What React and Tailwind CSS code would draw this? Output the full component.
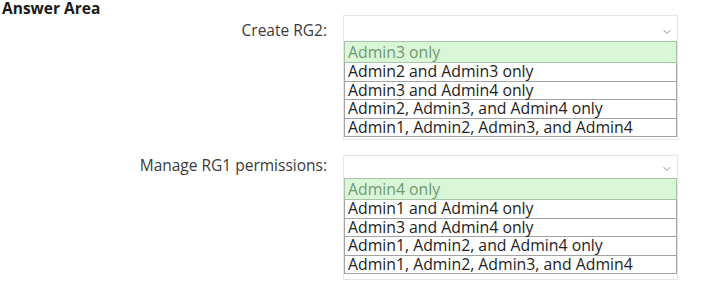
import { ChevronDown } from "lucide-react";

const groups = [
  {
    label: "Create RG2:",
    labelPad: "pt-[6px]",
    header: "h-[25px]",
    options: [
      "Admin3 only",
      "Admin2 and Admin3 only",
      "Admin3 and Admin4 only",
      "Admin2, Admin3, and Admin4 only",
      "Admin1, Admin2, Admin3, and Admin4",
    ],
  },
  {
    label: "Manage RG1 permissions:",
    labelPad: "pt-[1px]",
    header: "h-[22px]",
    options: [
      "Admin4 only",
      "Admin1 and Admin4 only",
      "Admin3 and Admin4 only",
      "Admin1, Admin2, and Admin4 only",
      "Admin1, Admin2, Admin3, and Admin4",
    ],
  },
];

function Dropdown({ label, labelPad, header, options }) {
  return (
    <div className="flex items-start">
      <div className={`w-[328px] pr-[1px] ${labelPad} text-right text-[15.5px] leading-[18px] text-[#3a3a3a]`}>
        {label}
      </div>

      <div className="ml-[15px] w-[335px] h-[125px] border border-[#e6e6e6]">
        {/* header with chevron */}
        <div className={`${header} flex items-end justify-end pr-[4px] pb-[3px]`}>
          <ChevronDown size={12} strokeWidth={2} className="text-[#8a8a8a]" />
        </div>

        <div className="flex flex-col">
          <div className="h-[22px] border border-[#a8c4a8] bg-[#d9f6d6] pl-[3px] text-[15.8px] leading-[20px] text-[#6f9a6f]">
            {options[0]}
          </div>
          {options.slice(1).map((opt) => (
            <div
              key={opt}
              className="h-[18.5px] border border-t-0 border-[#a3a3a3] pl-[3px] text-[15.8px] leading-[17px] text-[#222]"
            >
              {opt}
            </div>
          ))}
        </div>
      </div>
    </div>
  );
}

export default function App() {
  return (
    <div className="w-[702px] h-[297px] bg-white font-['Open_Sans',sans-serif] overflow-hidden">
      <div className="h-[15px] pl-[2px] text-[15.5px] leading-[17px] font-bold text-[#1a1a1a]">
        Answer Area
      </div>

      <div className="flex flex-col gap-[15px]">
        {groups.map((g) => (
          <Dropdown key={g.label} {...g} />
        ))}
      </div>
    </div>
  );
}
